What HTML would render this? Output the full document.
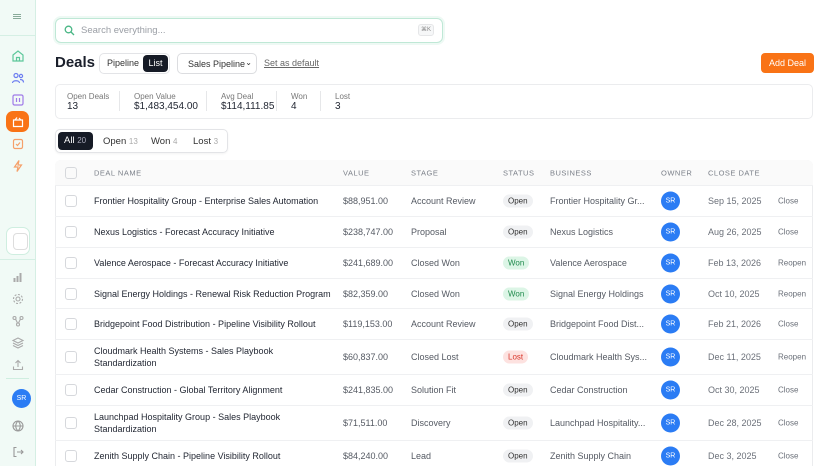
<!DOCTYPE html>
<html><head><meta charset="utf-8"><style>
*{box-sizing:border-box;margin:0;padding:0}
html,body{width:828px;height:466px;overflow:hidden}
body{background:#fff;font-family:"Liberation Sans",sans-serif;color:#1f2430;position:relative}
.a{position:absolute}
.sb{left:0;top:0;width:36px;height:466px;background:#f1faf6;border-right:1px solid #d5efe4}
.ic{position:absolute;left:11px;width:14px;height:14px}
.row{position:absolute;left:55px;width:758px;border-bottom:1px solid #eff0f2;font-size:9px}
.row span{position:absolute;top:50%;transform:translateY(-50%);white-space:nowrap}
.cb{left:10px;width:12px;height:12px;border:1px solid #d6d8dc;border-radius:3px}
.nm{left:39px;color:#1f2430;line-height:12px}
.v{left:288px;color:#555a63}
.st{left:356px;color:#555a63}
.pill{left:448px;font-size:8px;padding:2px 5px;border-radius:7px;background:#f0f1f3;color:#333}
.won{background:#dcf5e6;color:#1f8a4c}
.lost{background:#fde2e0;color:#d9362b}
.bz{left:495px;color:#555a63}
.av{left:606px;width:19px;height:19px;border-radius:50%;background:#2b7cf4;color:#fff;font-size:7px;text-align:center;line-height:19px}
.dt{left:653px;color:#6b7079}
.ac{left:723px;color:#6b7079;font-size:8px}
.hd{position:absolute;top:50%;transform:translateY(-50%);font-size:7.5px;color:#7a7f88;letter-spacing:.5px}
</style></head><body>
<div class="a sb">
 <div class="a" style="left:13px;top:14px;width:8px;height:1px;background:#8a9;box-shadow:0 2px 0 #8a9,0 4px 0 #8a9"></div>
 <div class="a" style="left:0;top:35px;width:35px;height:1px;background:#d5efe4"></div>
 <svg class="ic" style="top:49px" viewBox="0 0 14 14" fill="none" stroke="#5cc79a" stroke-width="1.2"><path d="M2 6L7 2l5 4v6H2z M5.5 12V8.5h3V12"/></svg>
 <svg class="ic" style="top:71px" viewBox="0 0 14 14" fill="none" stroke="#6c7df0" stroke-width="1.2"><circle cx="5" cy="4.5" r="2"/><circle cx="10" cy="5" r="1.6"/><path d="M1.5 12c0-3 7-3 7 0M9 8.5c2 0 3.5 1 3.5 3"/></svg>
 <svg class="ic" style="top:93px" viewBox="0 0 14 14" fill="none" stroke="#a07ae8" stroke-width="1.2"><rect x="2" y="2" width="10" height="10" rx="1.5"/><path d="M5.5 5v4M8.5 5v4"/></svg>
 <div class="a" style="left:6px;top:111px;width:23px;height:21px;border-radius:7px;background:#f97316"></div>
 <svg class="ic" style="top:115px" viewBox="0 0 14 14" fill="none" stroke="#fff" stroke-width="1.2"><path d="M2.5 5h9v6.5h-9zM4 5l2-2.5M8 3l2 2"/></svg>
 <svg class="ic" style="top:137px" viewBox="0 0 14 14" fill="none" stroke="#f5a06a" stroke-width="1.2"><rect x="2.5" y="2.5" width="9" height="9" rx="1.5"/><path d="M5 7l1.5 1.5L9 5.5"/></svg>
 <svg class="ic" style="top:159px" viewBox="0 0 14 14" fill="none" stroke="#f5a06a" stroke-width="1.2"><path d="M8 1.5L3.5 8H7l-1 4.5L10.5 6H7z"/></svg>
 <div class="a" style="left:6px;top:227px;width:24px;height:28px;border-radius:7px;border:1px solid #cfeee0;background:#fff"></div>
 <div class="a" style="left:13px;top:233px;width:15px;height:17px;border-radius:4px;border:1px solid #ddd;background:#fff"></div>
 <div class="a" style="left:0;top:259px;width:35px;height:1px;background:#d5efe4"></div>
 <svg class="ic" style="top:270px" viewBox="0 0 14 14" fill="#aaa"><rect x="2.5" y="8" width="2" height="4"/><rect x="5.5" y="6" width="2" height="6"/><rect x="8.5" y="3" width="2" height="9"/></svg>
 <svg class="ic" style="top:292px" viewBox="0 0 14 14" fill="none" stroke="#aaa" stroke-width="1.1"><circle cx="7" cy="7" r="2"/><circle cx="7" cy="7" r="4.5" stroke-dasharray="2 1.5"/></svg>
 <svg class="ic" style="top:314px" viewBox="0 0 14 14" fill="none" stroke="#aaa" stroke-width="1.1"><circle cx="3.5" cy="4" r="1.5"/><circle cx="10.5" cy="4" r="1.5"/><circle cx="7" cy="10.5" r="1.5"/><path d="M4.5 5l2 4M9.5 5l-2 4"/></svg>
 <svg class="ic" style="top:336px" viewBox="0 0 14 14" fill="none" stroke="#aaa" stroke-width="1.1"><path d="M7 2l5 2.5-5 2.5-5-2.5zM2 7l5 2.5L12 7M2 9.5L7 12l5-2.5"/></svg>
 <svg class="ic" style="top:358px" viewBox="0 0 14 14" fill="none" stroke="#aaa" stroke-width="1.1"><path d="M7 9V2.5M4.5 5L7 2.5 9.5 5M2.5 8.5v3h9v-3"/></svg>
 <div class="a" style="left:6px;top:378px;width:23px;height:1px;background:#cfeee0"></div>
 <div class="a" style="left:12px;top:389px;width:19px;height:19px;border-radius:50%;background:#2b7cf4;color:#fff;font-size:7px;text-align:center;line-height:19px">SR</div>
 <svg class="ic" style="top:419px" viewBox="0 0 14 14" fill="none" stroke="#999" stroke-width="1.1"><circle cx="7" cy="7" r="5"/><path d="M2 7h10M7 2c-3 3-3 7 0 10M7 2c3 3 3 7 0 10"/></svg>
 <svg class="ic" style="top:445px" viewBox="0 0 14 14" fill="none" stroke="#999" stroke-width="1.1"><path d="M5.5 2.5H3v9h2.5M6 7h6M10 5l2 2-2 2"/></svg>
</div>

<div class="a" style="left:55px;top:18px;width:388px;height:25px;border:1px solid #bfe8d6;border-radius:6px;box-shadow:0 0 0 2px #eef9f4"></div>
<svg class="a" style="left:64px;top:25px" width="11" height="11" viewBox="0 0 11 11" fill="none" stroke="#49b685" stroke-width="1.3"><circle cx="4.5" cy="4.5" r="3.3"/><path d="M7 7l3 3"/></svg>
<div class="a" style="left:81px;top:25px;font-size:9.5px;color:#9a9ea5">Search everything...</div>
<div class="a" style="left:418px;top:24px;width:16px;height:12px;border:1px solid #e5e6e8;border-radius:3px;background:#f6f7f8;font-size:6px;color:#888;text-align:center;line-height:10px">⌘K</div>

<div class="a" style="left:55px;top:54px;font-size:15px;font-weight:bold;color:#1a1f2b">Deals</div>
<div class="a" style="left:99px;top:53px;width:71px;height:21px;border:1px solid #e3e4e7;border-radius:5px"></div>
<div class="a" style="left:107px;top:58px;font-size:9px;color:#333">Pipeline</div>
<div class="a" style="left:143px;top:55px;width:25px;height:17px;border-radius:4px;background:#161b26;color:#fff;font-size:9px;text-align:center;line-height:17px">List</div>
<div class="a" style="left:177px;top:53px;width:80px;height:21px;border:1px solid #dcdde0;border-radius:5px;font-size:9px;color:#333;padding:5px 0 0 10px">Sales Pipeline <span style="position:absolute;right:4px;top:4px;font-size:8px">⌄</span></div>
<div class="a" style="left:264px;top:58px;font-size:9px;color:#666;text-decoration:underline">Set as default</div>
<div class="a" style="left:761px;top:53px;width:53px;height:20px;border-radius:4px;background:#f97316;color:#fff;font-size:9px;text-align:center;line-height:20px">Add Deal</div>

<div class="a" style="left:55px;top:84px;width:758px;height:35px;border:1px solid #ebecee;border-radius:5px"></div>
<div class="a" style="left:67px;top:92px;font-size:8px;color:#777">Open Deals</div><div class="a" style="left:67px;top:101px;font-size:10px">13</div>
<div class="a" style="left:119px;top:91px;width:1px;height:20px;background:#e6e7e9"></div>
<div class="a" style="left:134px;top:92px;font-size:8px;color:#777">Open Value</div><div class="a" style="left:134px;top:101px;font-size:10px">$1,483,454.00</div>
<div class="a" style="left:206px;top:91px;width:1px;height:20px;background:#e6e7e9"></div>
<div class="a" style="left:221px;top:92px;font-size:8px;color:#777">Avg Deal</div><div class="a" style="left:221px;top:101px;font-size:10px">$114,111.85</div>
<div class="a" style="left:276px;top:91px;width:1px;height:20px;background:#e6e7e9"></div>
<div class="a" style="left:291px;top:92px;font-size:8px;color:#777">Won</div><div class="a" style="left:291px;top:101px;font-size:10px">4</div>
<div class="a" style="left:320px;top:91px;width:1px;height:20px;background:#e6e7e9"></div>
<div class="a" style="left:335px;top:92px;font-size:8px;color:#777">Lost</div><div class="a" style="left:335px;top:101px;font-size:10px">3</div>

<div class="a" style="left:55px;top:129px;width:173px;height:24px;border:1px solid #e3e4e7;border-radius:5px;box-shadow:0 1px 2px rgba(0,0,0,.05)"></div>
<div class="a" style="left:58px;top:132px;width:35px;height:18px;border-radius:4px;background:#161b26;color:#fff;font-size:9.5px;line-height:18px;padding-left:6px">All <span style="color:#aab;font-size:8px">20</span></div>
<div class="a" style="left:103px;top:136px;font-size:9.5px;color:#333">Open <span style="color:#aaa;font-size:8px">13</span></div>
<div class="a" style="left:151px;top:136px;font-size:9.5px;color:#333">Won <span style="color:#aaa;font-size:8px">4</span></div>
<div class="a" style="left:193px;top:136px;font-size:9.5px;color:#333">Lost <span style="color:#aaa;font-size:8px">3</span></div>

<div class="a" style="left:55px;top:160px;width:758px;height:320px;border:1px solid #ebecee;border-radius:6px"></div>
<div class="row" style="top:160px;height:26px;background:#fafafa;border-radius:6px 6px 0 0">
 <span class="cb"></span><span class="hd" style="left:39px">DEAL NAME</span><span class="hd" style="left:288px">VALUE</span><span class="hd" style="left:356px">STAGE</span><span class="hd" style="left:448px">STATUS</span><span class="hd" style="left:495px">BUSINESS</span><span class="hd" style="left:606px">OWNER</span><span class="hd" style="left:653px">CLOSE DATE</span>
</div>
<div class="row" style="top:186px;height:31px"><span class="cb"></span><span class="nm">Frontier Hospitality Group - Enterprise Sales Automation</span><span class="v">$88,951.00</span><span class="st">Account Review</span><span class="pill">Open</span><span class="bz">Frontier Hospitality Gr...</span><span class="av">SR</span><span class="dt">Sep 15, 2025</span><span class="ac">Close</span></div>
<div class="row" style="top:217px;height:31px"><span class="cb"></span><span class="nm">Nexus Logistics - Forecast Accuracy Initiative</span><span class="v">$238,747.00</span><span class="st">Proposal</span><span class="pill">Open</span><span class="bz">Nexus Logistics</span><span class="av">SR</span><span class="dt">Aug 26, 2025</span><span class="ac">Close</span></div>
<div class="row" style="top:248px;height:31px"><span class="cb"></span><span class="nm">Valence Aerospace - Forecast Accuracy Initiative</span><span class="v">$241,689.00</span><span class="st">Closed Won</span><span class="pill won">Won</span><span class="bz">Valence Aerospace</span><span class="av">SR</span><span class="dt">Feb 13, 2026</span><span class="ac">Reopen</span></div>
<div class="row" style="top:279px;height:30px"><span class="cb"></span><span class="nm">Signal Energy Holdings - Renewal Risk Reduction Program</span><span class="v">$82,359.00</span><span class="st">Closed Won</span><span class="pill won">Won</span><span class="bz">Signal Energy Holdings</span><span class="av">SR</span><span class="dt">Oct 10, 2025</span><span class="ac">Reopen</span></div>
<div class="row" style="top:309px;height:31px"><span class="cb"></span><span class="nm">Bridgepoint Food Distribution - Pipeline Visibility Rollout</span><span class="v">$119,153.00</span><span class="st">Account Review</span><span class="pill">Open</span><span class="bz">Bridgepoint Food Dist...</span><span class="av">SR</span><span class="dt">Feb 21, 2026</span><span class="ac">Close</span></div>
<div class="row" style="top:340px;height:35px"><span class="cb"></span><span class="nm">Cloudmark Health Systems - Sales Playbook<br>Standardization</span><span class="v">$60,837.00</span><span class="st">Closed Lost</span><span class="pill lost">Lost</span><span class="bz">Cloudmark Health Sys...</span><span class="av">SR</span><span class="dt">Dec 11, 2025</span><span class="ac">Reopen</span></div>
<div class="row" style="top:375px;height:31px"><span class="cb"></span><span class="nm">Cedar Construction - Global Territory Alignment</span><span class="v">$241,835.00</span><span class="st">Solution Fit</span><span class="pill">Open</span><span class="bz">Cedar Construction</span><span class="av">SR</span><span class="dt">Oct 30, 2025</span><span class="ac">Close</span></div>
<div class="row" style="top:406px;height:35px"><span class="cb"></span><span class="nm">Launchpad Hospitality Group - Sales Playbook<br>Standardization</span><span class="v">$71,511.00</span><span class="st">Discovery</span><span class="pill">Open</span><span class="bz">Launchpad Hospitality...</span><span class="av">SR</span><span class="dt">Dec 28, 2025</span><span class="ac">Close</span></div>
<div class="row" style="top:441px;height:31px"><span class="cb"></span><span class="nm">Zenith Supply Chain - Pipeline Visibility Rollout</span><span class="v">$84,240.00</span><span class="st">Lead</span><span class="pill">Open</span><span class="bz">Zenith Supply Chain</span><span class="av">SR</span><span class="dt">Dec 3, 2025</span><span class="ac">Close</span></div>
</body></html>
